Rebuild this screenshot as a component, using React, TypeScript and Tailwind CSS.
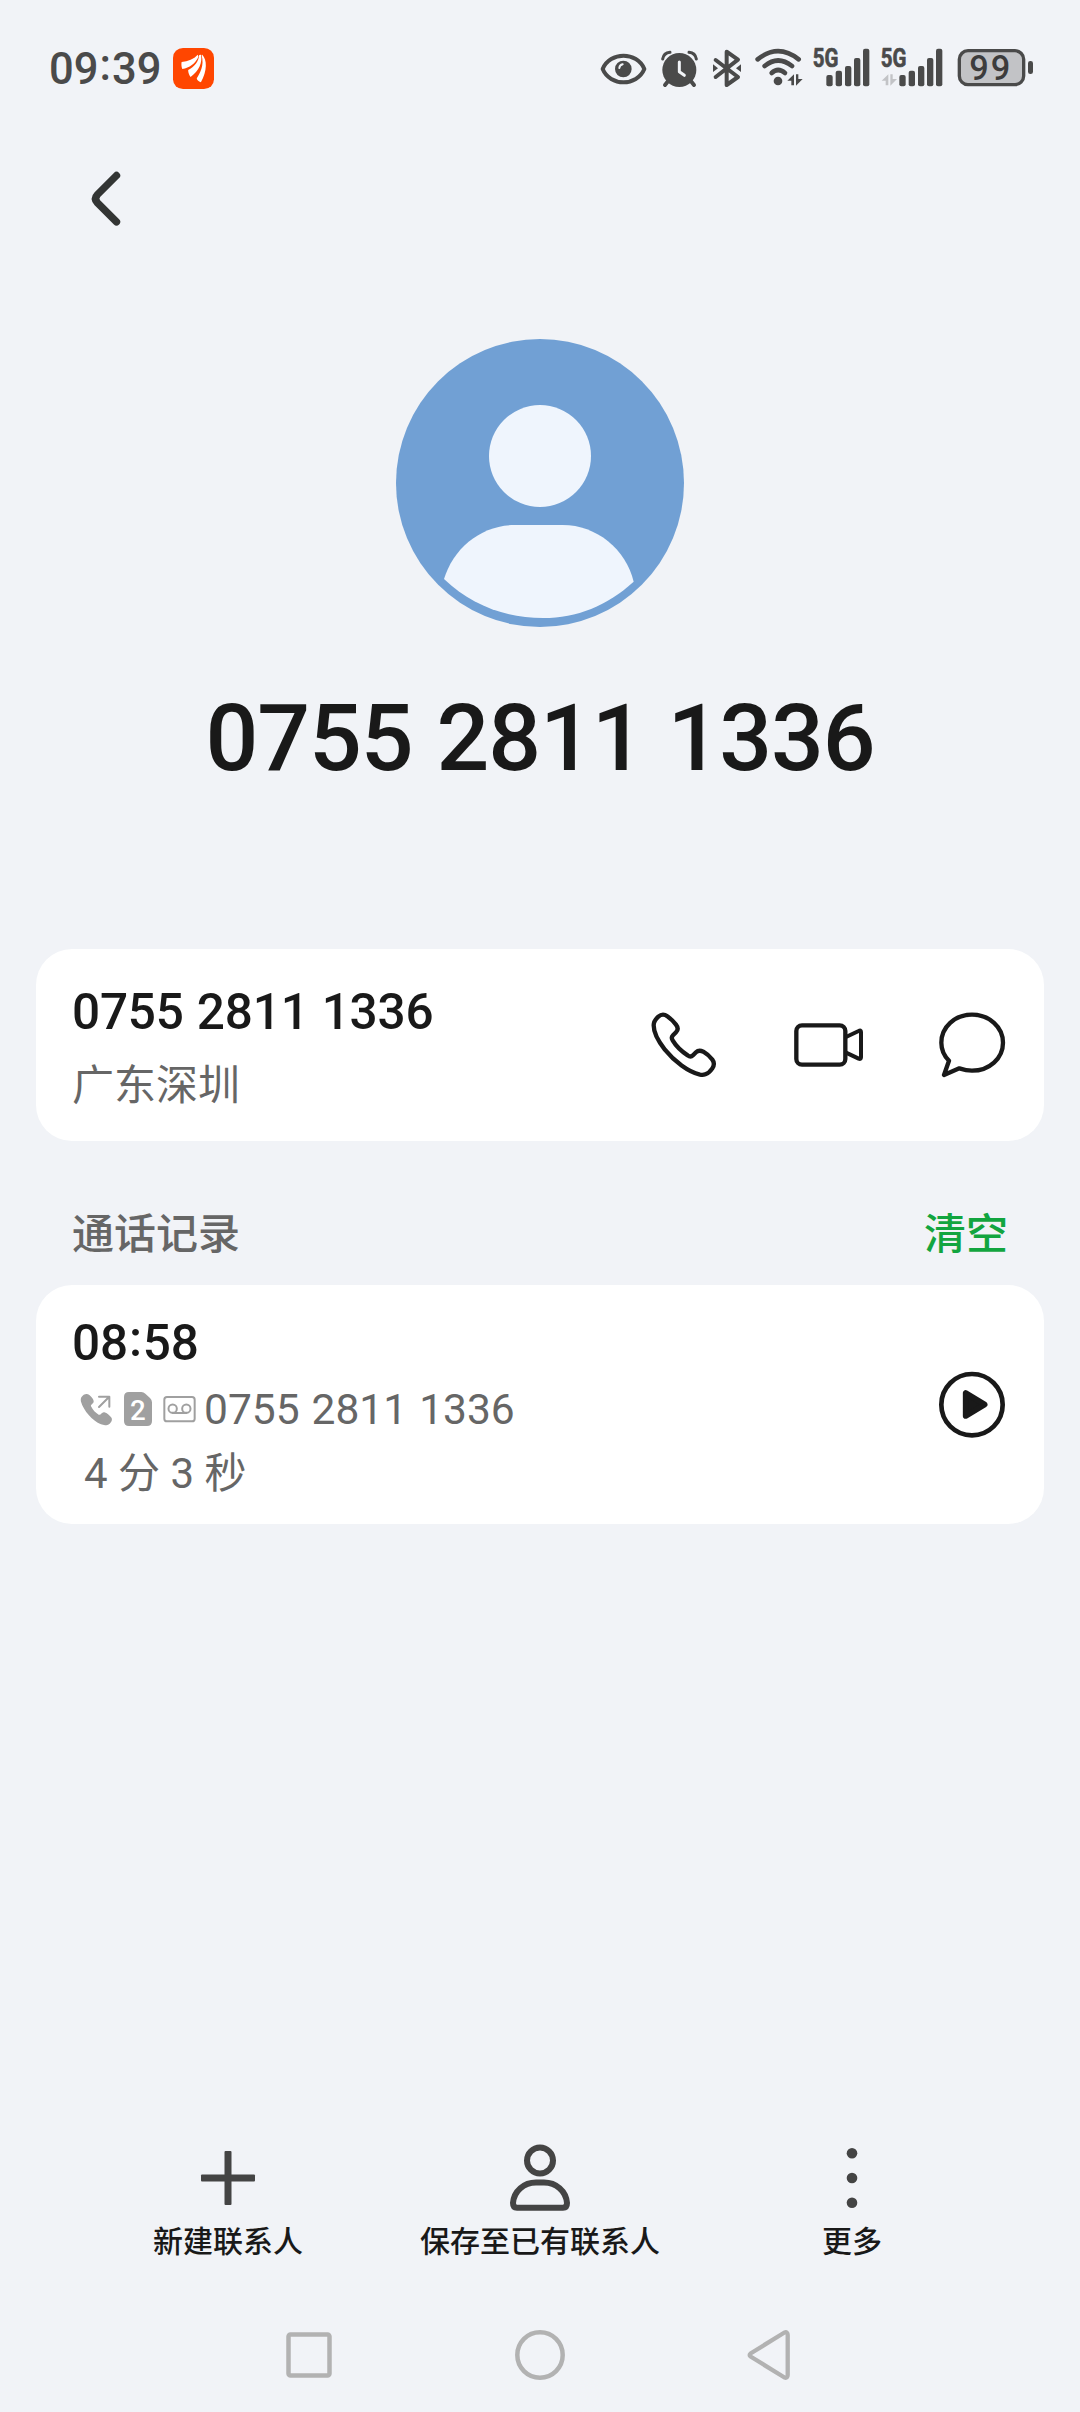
import type { ReactNode } from 'react'

const PHONE = '0755 2811 1336'

type IconProps = {
  viewBox: string
  className: string
  children: ReactNode
}

const Icon = ({ viewBox, className, children }: IconProps) => (
  <svg
    viewBox={viewBox}
    preserveAspectRatio="none"
    fill="none"
    strokeLinecap="round"
    strokeLinejoin="round"
    className={`block shrink-0 ${className}`}
  >
    {children}
  </svg>
)

// The colon sits at the middle of the digits
const Time = ({ value }: { value: string }) => {
  const [hours, minutes] = value.split(':')
  return (
    <>
      {hours}
      <span className="relative -top-[4px] px-[1px]">:</span>
      {minutes}
    </>
  )
}

/* Status bar */

const SignalBars = ({ x }: { x: number }) => (
  <g fill="#4a4a4a">
    <rect x={x} y="135" width="19" height="34" rx="6" />
    <rect x={x + 28} y="122" width="19" height="47" rx="6" />
    <rect x={x + 56} y="108" width="19" height="61" rx="6" />
    <rect x={x + 83} y="84" width="19" height="85" rx="6" />
    <rect x={x + 110} y="56" width="19" height="113" rx="6" />
  </g>
)

const NetworkLabel = ({ x }: { x: number }) => (
  <text
    x={x}
    y="111"
    textLength="77"
    lengthAdjust="spacingAndGlyphs"
    fontSize="75"
    strokeWidth="2"
    className="fill-[#4a4a4a] stroke-[#4a4a4a] font-bold"
  >
    5G
  </text>
)

const StatusBar = () => (
  <div className="flex h-[136px] items-center pl-[49px] pr-[46px]">
    <span className="w-[124px] pt-[3px] text-[43.5px] font-medium text-[#4a4a4a]">
      <Time value="09:39" />
    </span>
    <Icon viewBox="502 84 119 123" className="h-[41px] w-[41px]">
      <rect x="502" y="84" width="119" height="123" rx="29" fill="#ff4600" />
      <path d="M527 126C546 124 562 117 574 104L576 110C566 131 550 143 529 147C526 140 526 132 527 126Z" fill="#fff" />
      <path d="M546 150C564 141 577 124 578 105L583 104C588 127 578 152 553 171C549 166 546 158 546 150Z" fill="#fff" />
      <path d="M587 104C601 120 602 150 583 187C576 184 571 180 571 175C579 161 594 138 585 105Z" fill="#fff" />
    </Icon>

    <div className="ml-auto flex items-center">
      <Icon viewBox="60 -6 141 240" className="h-[80px] w-[47px]">
        <path d="M68 117C90 64 171 64 193 117C171 170 90 170 68 117Z" stroke="#4a4a4a" strokeWidth="12" />
        <circle cx="130" cy="117" r="25" fill="#4a4a4a" />
        <path d="M118 114Q119 105 128 103" stroke="#f1f3f7" strokeWidth="6" />
      </Icon>
      <Icon viewBox="240 -6 117 240" className="ml-[13px] h-[80px] w-[39px]">
        <circle cx="298" cy="120" r="51" fill="#4a4a4a" />
        <path d="M248 87Q251 69 270 67M349 87Q346 69 327 67" stroke="#4a4a4a" strokeWidth="9" />
        <path d="M264 154L255 165M333 154L342 165" stroke="#4a4a4a" strokeWidth="12" />
        <path d="M298 96V125L313 136" stroke="#f1f3f7" strokeWidth="9" />
      </Icon>
      <Icon viewBox="396 -6 90 240" className="ml-[13px] h-[80px] w-[30px]">
        <path d="M407 90L474 141L440 165V65L474 89L407 141" stroke="#4a4a4a" strokeWidth="12" />
        <path d="M399 103L414 115L399 126ZM483 103L468 115L483 126Z" fill="#4a4a4a" />
      </Icon>
      <Icon viewBox="525 -6 144 240" className="ml-[13px] h-[80px] w-[48px]">
        <g stroke="#4a4a4a" strokeWidth="14">
          <path d="M533 88Q594 39 656 88" />
          <path d="M554 108Q594 75 636 108" />
          <path d="M575 129Q594 111 615 129" />
        </g>
        <circle cx="594" cy="153" r="13" fill="#4a4a4a" />
        <path d="M642 133V166H634V152H622ZM648 133H655V147H668L648 167Z" fill="#4a4a4a" />
      </Icon>
      <Icon viewBox="39 -6 171 240" className="ml-[10px] h-[80px] w-[57px]">
        <NetworkLabel x={38} />
        <SignalBars x={79} />
      </Icon>
      <Icon viewBox="243 -6 186 240" className="ml-[11px] h-[80px] w-[62px]">
        <NetworkLabel x={242} />
        <path d="M265 133V166H257V152H245ZM271 133H278V147H291L271 167Z" fill="#c2c3c6" />
        <SignalBars x={298} />
      </Icon>
      <Icon viewBox="471 -6 231 240" className="ml-[14px] h-[80px] w-[77px]">
        <rect x="478" y="62" width="193" height="102" rx="26" fill="#c2c3c6" stroke="#4a4a4a" strokeWidth="10" />
        <rect x="684" y="93" width="15" height="39" rx="7" fill="#4a4a4a" />
        <text x="508" y="149" fontSize="103" letterSpacing="6" className="fill-[#3c3c3c] font-medium">
          99
        </text>
      </Icon>
    </div>
  </div>
)

const Avatar = () => (
  <Icon viewBox="48 57 864 864" className="h-[288px] w-[288px]">
    <circle cx="480" cy="489" r="432" fill="#71a0d4" />
    <circle cx="480" cy="408" r="153" fill="#eff5fd" />
    <path
      d="M192 777C220 684 304 615 404 615H548C650 615 738 688 761 785C682 857 590 894 490 894C375 894 274 855 192 777Z"
      fill="#eff5fd"
    />
  </Icon>
)

const NumberCard = () => (
  <section className="flex h-[192px] items-center rounded-[36px] bg-white px-[36px]">
    <div className="flex flex-col gap-[16px] pt-[5px]">
      <span className="text-[49.5px] leading-[60px] font-medium tracking-[-0.2px] text-[#191919] [word-spacing:1px]">
        {PHONE}
      </span>
      <span className="text-[42px] leading-[56px] text-[#666]">广东深圳</span>
    </div>
    <div className="ml-auto flex gap-[72px]">
      <button aria-label="拨打">
        <Icon viewBox="84 207 216 216" className="h-[72px] w-[72px]">
          <path
            d="M101 256C101 246 106 238 115 230C124 222 133 222 142 229C152 236 161 245 168 254C175 263 175 270 168 277L159 286C154 291 154 295 158 301C168 318 185 334 203 346C209 351 214 351 219 346L228 337C234 331 241 331 250 335C261 341 269 349 277 359C283 367 283 376 277 385C271 394 264 400 256 403C251 405 246 405 240 404C205 396 163 364 134 328C115 304 101 276 101 256Z"
            stroke="#191919"
            strokeWidth="13"
          />
        </Icon>
      </button>
      <button aria-label="视频通话">
        <Icon viewBox="516 207 216 216" className="h-[72px] w-[72px]">
          <rect x="529" y="256" width="147" height="118" rx="17" stroke="#191919" strokeWidth="13" />
          <path d="M678 291L716 273Q723 269 723 276V352Q723 359 716 356L678 338" stroke="#191919" strokeWidth="12" />
        </Icon>
      </button>
      <button aria-label="发送信息">
        <Icon viewBox="948 207 216 216" className="h-[72px] w-[72px]">
          <path
            d="M987 362C972 347 964 329 964 308C964 261 1004 224 1056 224C1108 224 1149 261 1149 308C1149 355 1108 392 1056 392C1042 392 1030 389 1018 385L972 405Z"
            stroke="#191919"
            strokeWidth="13"
          />
        </Icon>
      </button>
    </div>
  </section>
)

const CallRecord = () => (
  <section className="flex h-[239px] items-center rounded-[36px] bg-white px-[36px]">
    <div className="flex h-full flex-col pt-[28px]">
      <span className="text-[49.5px] leading-[60px] font-medium tracking-[-0.2px] text-[#191919]">
        <Time value="08:58" />
      </span>
      <div className="mt-[9px] flex h-[56px] items-center pl-[8px]">
        <Icon viewBox="150 359 99 114" className="h-[38px] w-[33px]">
          <path
            d="M154 378C160 368 171 365 178 371C185 377 190 383 191 389C192 397 181 399 183 405C188 416 197 425 206 430C213 433 215 421 223 423C231 425 240 433 245 440C247 446 245 452 239 457C231 463 221 462 213 459C187 448 161 418 153 391C152 386 152 382 154 378Z"
            fill="#a0a0a0"
          />
          <path d="M207 376H238V406M237 377L207 407" stroke="#a0a0a0" strokeWidth="6" />
        </Icon>
        <Icon viewBox="282 360 84 114" className="ml-[11px] h-[38px] w-[28px]">
          <path
            d="M297 363H334Q341 363 346 368L360 381Q366 387 366 394V450Q366 465 351 465H297Q282 465 282 450V378Q282 363 297 363Z"
            fill="#a0a0a0"
          />
          <text x="300" y="446" fontSize="83" className="fill-white font-medium">
            2
          </text>
        </Icon>
        <Icon viewBox="400 360 99 114" className="ml-[11px] h-[38px] w-[33px]">
          <g stroke="#a0a0a0" strokeWidth="6">
            <rect x="404" y="378" width="91" height="73" rx="8" />
            <circle cx="429" cy="413" r="12.5" />
            <circle cx="470" cy="413" r="12.5" />
            <path d="M429 426H470" />
          </g>
        </Icon>
        <span className="ml-[8px] text-[42.5px] leading-[56px] text-[#666] [word-spacing:1.5px]">{PHONE}</span>
      </div>
      <span className="mt-[8px] pl-[12px] text-[42px] leading-[56px] text-[#666]">
        4 分 3 秒
      </span>
    </div>
    <button aria-label="播放录音" className="ml-auto">
      <Icon viewBox="168 265 216 216" className="h-[72px] w-[72px]">
        <circle cx="276" cy="372" r="92" stroke="#191919" strokeWidth="14" />
        <path d="M257 337V406L314 371.5Z" fill="#191919" stroke="#191919" strokeWidth="17" />
      </Icon>
    </button>
  </section>
)

const actions = [
  {
    label: '新建联系人',
    icon: (
      <Icon viewBox="192 2142 72 72" className="h-[72px] w-[72px]">
        <rect x="201" y="2174.5" width="54" height="7" rx="1" fill="#444" />
        <rect x="224.5" y="2151" width="7" height="54" rx="1" fill="#444" />
      </Icon>
    ),
  },
  {
    label: '保存至已有联系人',
    icon: (
      <Icon viewBox="504 2142 72 72" className="h-[72px] w-[72px]">
        <circle cx="540" cy="2160.5" r="13" stroke="#444" strokeWidth="6" />
        <path
          d="M513 2203C514 2191 524 2182.5 536 2182.5H544C556 2182.5 566 2191 567 2203Q567 2207.7 563 2207.7H517Q513 2207.7 513 2203Z"
          stroke="#444"
          strokeWidth="6"
        />
      </Icon>
    ),
  },
  {
    label: '更多',
    icon: (
      <Icon viewBox="816 2142 72 72" className="h-[72px] w-[72px]">
        <g fill="#444">
          <circle cx="852" cy="2153.3" r="5.3" />
          <circle cx="852" cy="2178" r="5.3" />
          <circle cx="852" cy="2202.7" r="5.3" />
        </g>
      </Icon>
    ),
  },
]

const SystemNav = () => (
  <nav className="mt-auto flex h-[114px] items-center justify-center gap-[159px]">
    <Icon viewBox="273 2319 72 72" className="h-[72px] w-[72px]">
      <rect x="288.5" y="2334.5" width="41" height="41" rx="2" stroke="#b2b2b2" strokeWidth="4.5" />
    </Icon>
    <Icon viewBox="504 2319 72 72" className="h-[72px] w-[72px]">
      <circle cx="540" cy="2355" r="22.7" stroke="#b2b2b2" strokeWidth="4.5" />
    </Icon>
    <Icon viewBox="735 2319 72 72" className="h-[72px] w-[72px]">
      <path
        d="M750.5 2353.5L784.5 2332.5Q787.7 2331.5 787.7 2335V2375Q787.7 2378.5 784.5 2377.5L750.5 2356.5Q748.8 2355 750.5 2353.5Z"
        stroke="#b2b2b2"
        strokeWidth="4.3"
      />
    </Icon>
  </nav>
)

const App = () => {
  return (
    <div className="flex h-[2412px] w-[1080px] flex-col bg-[#f1f3f7] font-['Roboto','Noto_Sans_CJK_SC',sans-serif]">
      <StatusBar />

      {/* Header */}
      <header className="flex h-[125px] items-center pl-[72px]">
        <button aria-label="返回">
          <Icon viewBox="72 163 72 72" className="h-[72px] w-[72px]">
            <path
              d="M116.5 175.5L97.5 194.5Q93.5 198.7 97.5 202.9L116.5 221.9"
              stroke="#333534"
              strokeWidth="7.4"
            />
          </Icon>
        </button>
      </header>

      <div className="flex flex-col items-center pt-[78px]">
        <Avatar />
        <h1 className="mt-[52px] text-[93px] leading-[120px] font-medium tracking-[-1.1px] text-[#191919] [word-spacing:2px]">
          {PHONE}
        </h1>
      </div>

      <main className="mt-[150px] px-[36px]">
        <NumberCard />
        <div className="mt-[64px] mb-[20px] flex justify-between px-[36px] text-[42px] leading-[60px] font-medium">
          <h2 className="text-[#666]">通话记录</h2>
          <button className="text-[#12a53f]">清空</button>
        </div>
        <CallRecord />
      </main>

      {/* Bottom actions */}
      <div className="mt-[618px] flex px-[72px]">
        {actions.map(({ label, icon }) => (
          <button key={label} className="flex w-[312px] flex-col items-center">
            {icon}
            <span className="mt-[8px] text-[30px] leading-[40px] font-medium text-[#191919]">{label}</span>
          </button>
        ))}
      </div>

      <SystemNav />
    </div>
  )
}

export default App
